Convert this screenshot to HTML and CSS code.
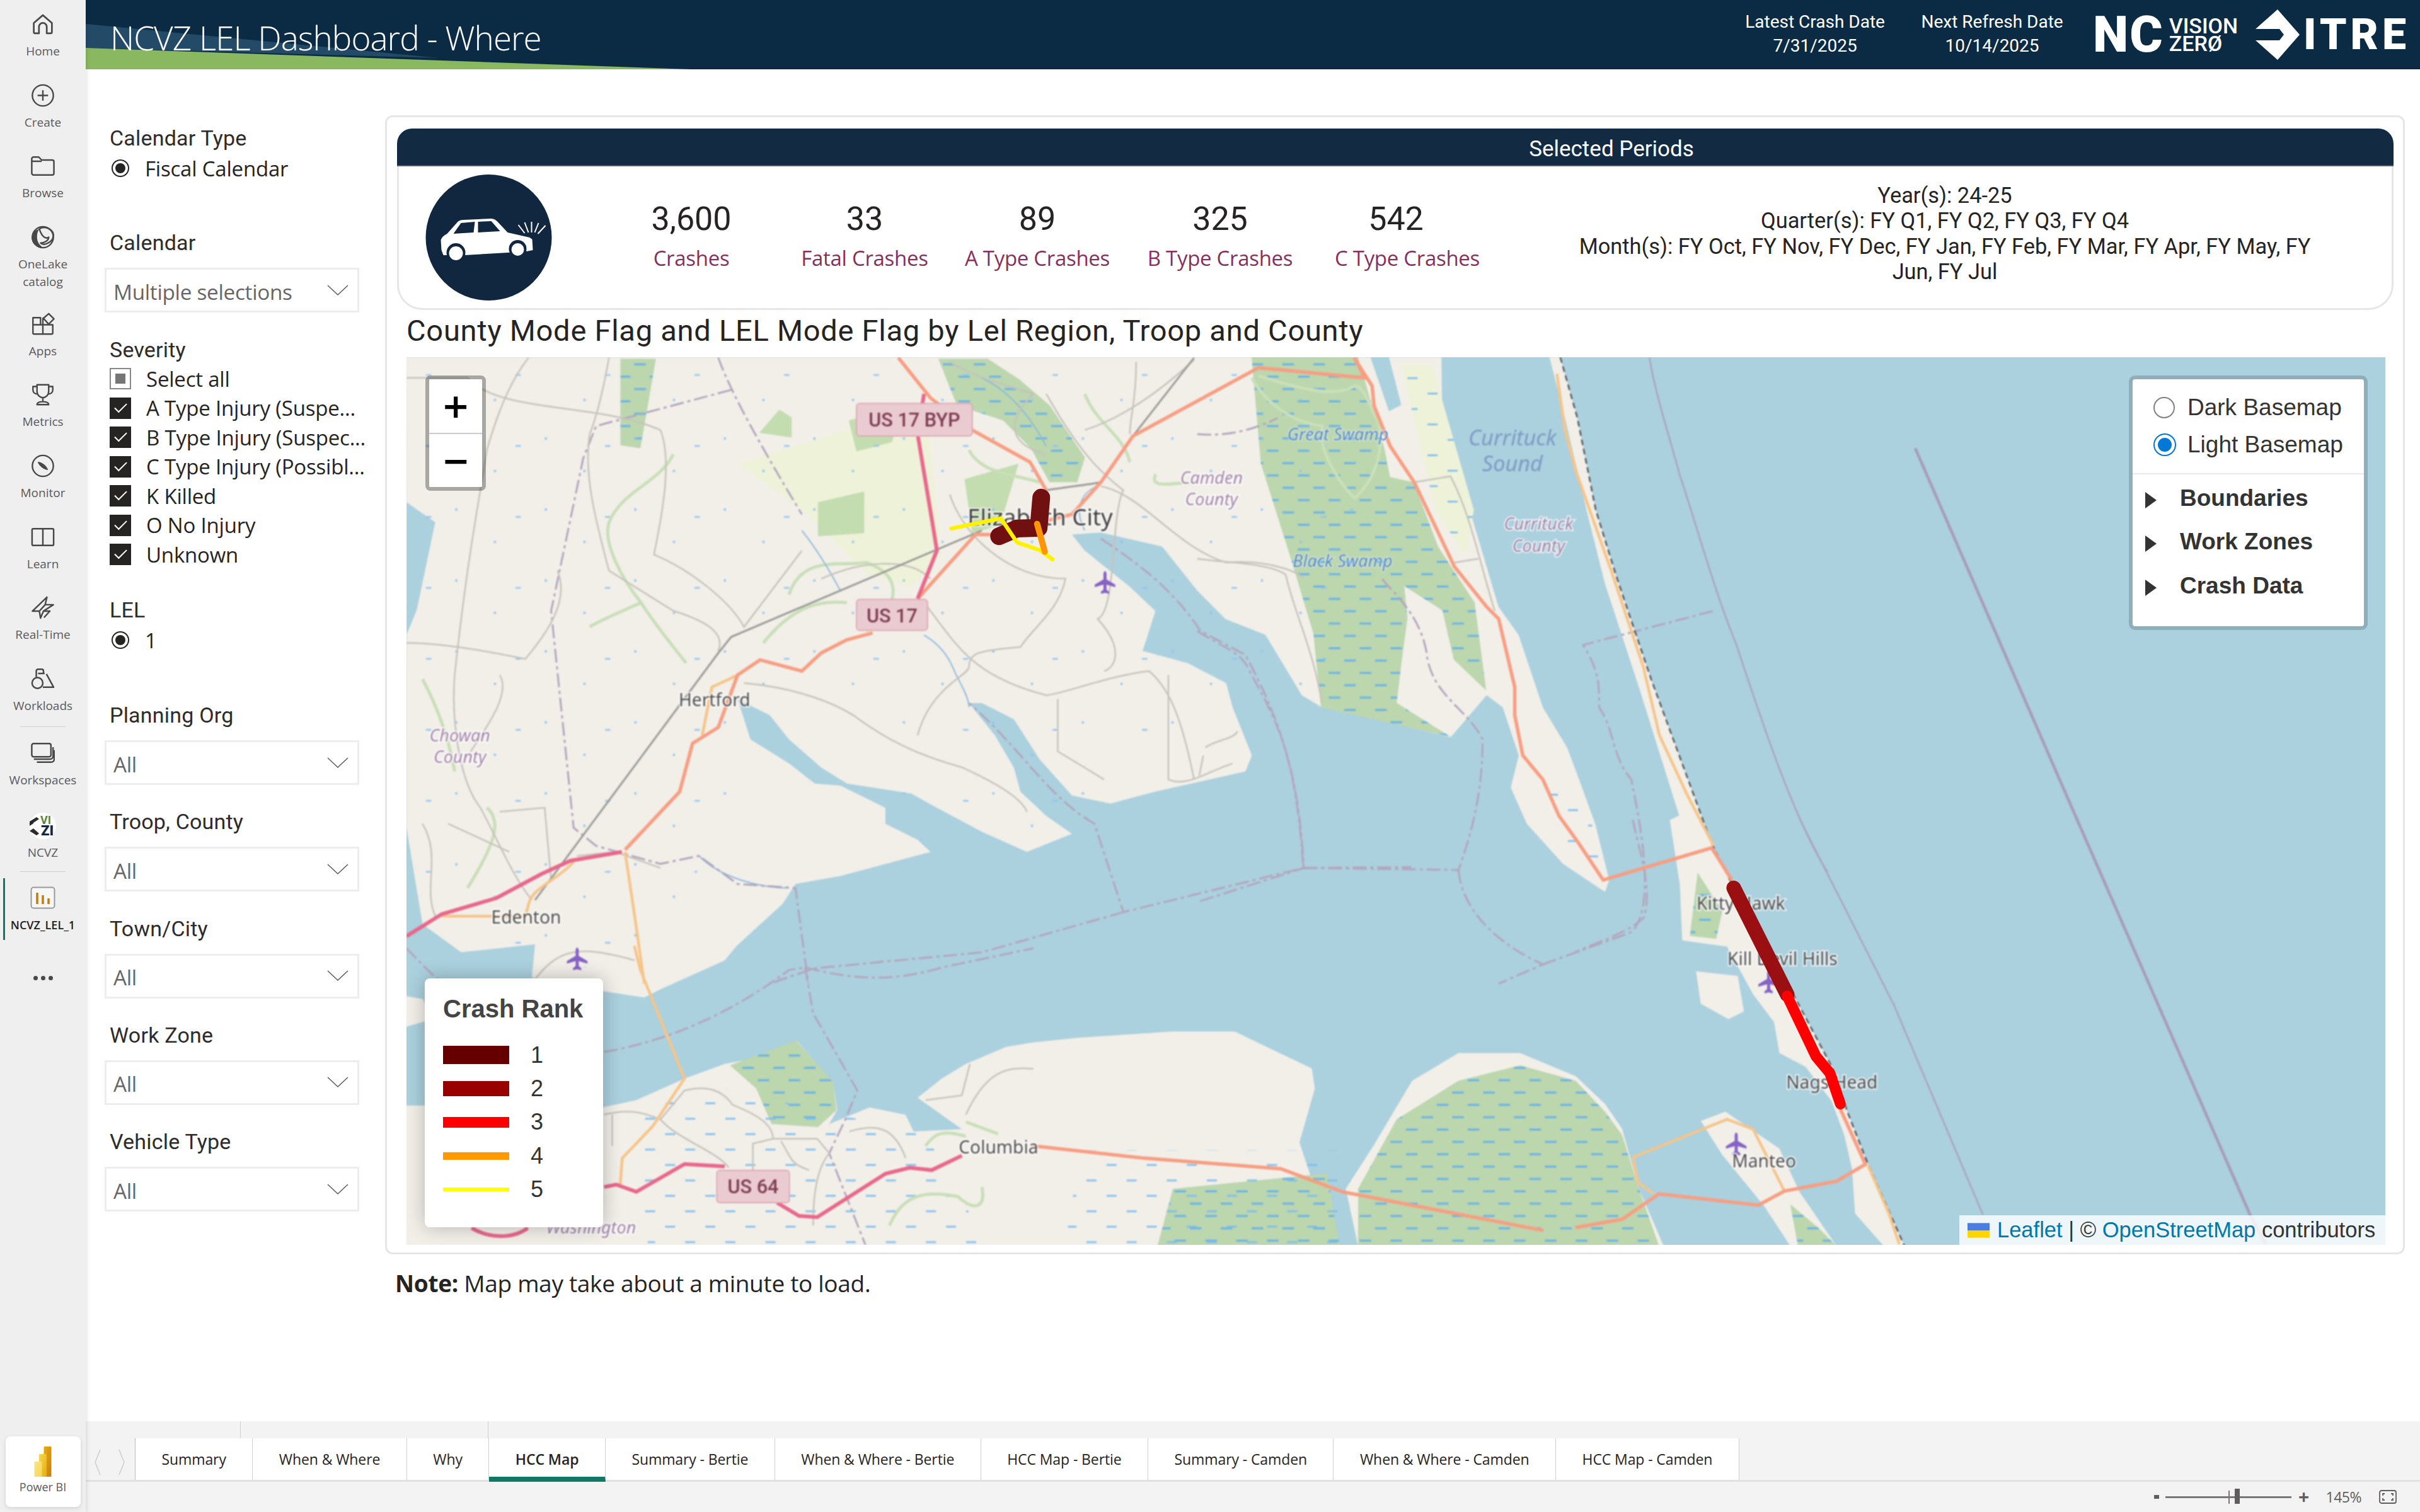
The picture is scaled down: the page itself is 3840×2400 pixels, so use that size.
FILE: index.html
```html
<!DOCTYPE html>
<html lang="en">
  <head>
    <meta charset="UTF-8" />
    <title>NCVZ LEL Dashboard - Where</title>
    <link rel="stylesheet" href="styles.css">
  </head>
  <body>
    <div class="app">
      <nav class="nav">
        <a class="nav-item">
          <svg class="nav-icon" viewBox="0 0 36 36"><path d="M4 16 L18 4 L32 16 V30 a2 2 0 0 1 -2 2 H24 V22 a6 6 0 0 0 -12 0 V32 H6 a2 2 0 0 1 -2 -2 Z"/></svg>
          <span>Home</span>
        </a>
        <a class="nav-item">
          <svg class="nav-icon" viewBox="0 0 40 40"><circle cx="20" cy="20" r="18"/><path d="M20 11 V29 M11 20 H29"/></svg>
          <span>Create</span>
        </a>
        <a class="nav-item">
          <svg class="nav-icon" viewBox="0 0 40 36"><path d="M1.5 6 a3 3 0 0 1 3 -3 H13 L18 8 H35.5 a3 3 0 0 1 3 3 V30 a3 3 0 0 1 -3 3 H4.5 a3 3 0 0 1 -3 -3 Z M1.5 10 H18"/></svg>
          <span>Browse</span>
        </a>
        <a class="nav-item nav-item-tall">
          <svg class="nav-icon" viewBox="0 0 40 40"><path class="nav-fill" d="M14 6 C5 8 0 15 1 23 C2 32 10 38 20 38 C16 34 10 30 10 20 C10 14 11 10 14 6 Z"/><path d="M14 6 C20 1 30 3 36 10 C40 16 38 24 32 28 C26 32 20 34 16 30 C22 30 30 26 30 20 C24 24 18 18 14 6 Z"/><circle cx="20" cy="20" r="18"/></svg>
          <span>OneLake<br>catalog</span>
        </a>
        <a class="nav-item">
          <svg class="nav-icon" viewBox="0 0 40 40"><path d="M3 9 H16 V21 H3 Z M3 21 H20 V37 H5 a2 2 0 0 1 -2 -2 Z M20 21 H37 V35 a2 2 0 0 1 -2 2 H20 Z M20 9 V21 M21 10 L30 2 L39 11 L30 20 Z"/></svg>
          <span>Apps</span>
        </a>
        <a class="nav-item">
          <svg class="nav-icon" viewBox="0 0 40 40"><path d="M10 3 H30 V14 C30 21 25 25 20 25 C15 25 10 21 10 14 Z M10 6 H3 V12 C3 16 6 19 11 19 M30 6 H37 V12 C37 16 34 19 29 19 M20 25 V32 M10 37 C10 33 14 32 20 32 C26 32 30 33 30 37 Z"/></svg>
          <span>Metrics</span>
        </a>
        <a class="nav-item">
          <svg class="nav-icon" viewBox="0 0 40 40"><circle cx="20" cy="20" r="18"/><path class="nav-fill" d="M11 13 C18 13 26 19 29 27 C22 27 14 21 11 13 Z"/></svg>
          <span>Monitor</span>
        </a>
        <a class="nav-item">
          <svg class="nav-icon" viewBox="0 0 40 32"><path d="M4 2 H36 a2 2 0 0 1 2 2 V28 a2 2 0 0 1 -2 2 H4 a2 2 0 0 1 -2 -2 V4 a2 2 0 0 1 2 -2 Z M20 2 V30"/></svg>
          <span>Learn</span>
        </a>
        <a class="nav-item">
          <svg class="nav-icon" viewBox="0 0 40 40"><path d="M27 2 L24 15 H38 L21 26 L16 38 L14 26 H2 Z M14 26 L24 15 M21 26 H32 L22 37"/></svg>
          <span>Real-Time</span>
        </a>
        <a class="nav-item">
          <svg class="nav-icon" viewBox="0 0 40 36"><circle cx="11" cy="25" r="9"/><path d="M9 15 V5 a3 3 0 0 1 3 -3 H18 a3 3 0 0 1 3 3 V9 H12 M26 10 L38 32 H20 M15 9 H23"/></svg>
          <span>Workloads</span>
        </a>
        <div class="nav-rule"></div>
        <a class="nav-item">
          <svg class="nav-icon" viewBox="0 0 40 36"><rect x="1.5" y="2" width="32" height="22" rx="3"/><path d="M5 28 H32 a5 5 0 0 0 5 -5 V8 M10 33 H34 a5 5 0 0 0 5 -5 V13"/></svg>
          <span>Workspaces</span>
        </a>
        <a class="nav-item">
          <span class="nav-badge">
            <svg viewBox="0 0 48 42"><circle cx="24" cy="21" r="21" class="badge-bg"/><path class="badge-dark" d="M3 14 L14 7 L18 10 L9 16 V17 L3 21 Z M3 29 L9 25 L18 33 L14 36 Z"/><text x="20" y="18" class="badge-vi">VI</text><text x="21" y="36" class="badge-z">ZI</text></svg>
          </span>
          <span>NCVZ</span>
        </a>
        <div class="nav-rule nav-rule-low"></div>
        <a class="nav-item nav-item-active">
          <svg class="nav-report" viewBox="0 0 40 36"><rect x="1.5" y="1.5" width="37" height="33" rx="4"/><path d="M11 10 V28 M20 14 V28 M29 19 V28"/></svg>
          <span>NCVZ_LEL_1</span>
        </a>
        <div class="nav-more"><i></i><i></i><i></i></div>
        <a class="nav-app">
          <svg viewBox="0 0 36 64" class="nav-pbi">
            <defs>
              <linearGradient id="pb1" x1="0" x2="1" y1="0" y2="1"><stop offset="0" stop-color="#e6ad10"/><stop offset="1" stop-color="#c87d0e"/></linearGradient>
              <linearGradient id="pb2" x1="0" x2="1" y1="0" y2="1"><stop offset="0" stop-color="#f6d751"/><stop offset="1" stop-color="#e6ad10"/></linearGradient>
              <linearGradient id="pb3" x1="0" x2="1" y1="0" y2="1"><stop offset="0" stop-color="#f9e589"/><stop offset="1" stop-color="#f6d751"/></linearGradient>
            </defs>
            <rect x="20" y="0" width="16" height="64" rx="1.5" fill="url(#pb1)"/>
            <rect x="10" y="16" width="16" height="48" rx="1.5" fill="url(#pb2)"/>
            <rect x="0" y="32" width="16" height="32" rx="1.5" fill="url(#pb3)"/>
          </svg>
          <span>Power BI</span>
        </a>
      </nav>

      <div class="main">
        <header class="top-bar">
          <svg class="top-wedge" viewBox="0 0 1200 110" preserveAspectRatio="none">
            <polygon points="0,38 560,92 0,76" fill="#234a67"/>
            <polygon points="0,76 960,110 0,110" fill="#8ab860"/>
          </svg>
          <h1 class="top-title">NCVZ LEL Dashboard - Where</h1>
          <div class="top-date top-date-first">Latest Crash Date<br>7/31/2025</div>
          <div class="top-date top-date-next">Next Refresh Date<br>10/14/2025</div>
          <div class="logo-nc">
            <span class="logo-nc-big">NC</span>
            <span class="logo-nc-small">VISION<br>ZERØ</span>
          </div>
          <svg class="logo-arrow" viewBox="0 0 70 80"><path d="M35 0 L70 40 L35 80 L0 49 H38 L45 40 L38 31 H0 Z"/></svg>
          <span class="logo-itre">ITRE</span>
        </header>

        <div class="page">
          <aside class="filters">
            <div class="slicer slicer-type">
              <div class="slicer-label">Calendar Type</div>
              <div class="option"><span class="radio"></span>Fiscal Calendar</div>
            </div>
            <div class="slicer slicer-calendar">
              <div class="slicer-label">Calendar</div>
              <div class="dropdown"><span>Multiple selections</span><svg viewBox="0 0 34 18"><path d="M1 1 L17 16 L33 1"/></svg></div>
            </div>
            <div class="slicer slicer-severity">
              <div class="slicer-label">Severity</div>
              <div class="option"><span class="check check-part"></span>Select all</div>
              <div class="option"><span class="check"></span>A Type Injury (Suspe...</div>
              <div class="option"><span class="check"></span>B Type Injury (Suspec...</div>
              <div class="option"><span class="check"></span>C Type Injury (Possibl...</div>
              <div class="option"><span class="check"></span>K Killed</div>
              <div class="option"><span class="check"></span>O No Injury</div>
              <div class="option"><span class="check"></span>Unknown</div>
            </div>
            <div class="slicer slicer-lel">
              <div class="slicer-label">LEL</div>
              <div class="option"><span class="radio"></span>1</div>
            </div>
            <div class="slicer">
              <div class="slicer-label">Planning Org</div>
              <div class="dropdown"><span>All</span><svg viewBox="0 0 34 18"><path d="M1 1 L17 16 L33 1"/></svg></div>
            </div>
            <div class="slicer">
              <div class="slicer-label">Troop, County</div>
              <div class="dropdown"><span>All</span><svg viewBox="0 0 34 18"><path d="M1 1 L17 16 L33 1"/></svg></div>
            </div>
            <div class="slicer">
              <div class="slicer-label">Town/City</div>
              <div class="dropdown"><span>All</span><svg viewBox="0 0 34 18"><path d="M1 1 L17 16 L33 1"/></svg></div>
            </div>
            <div class="slicer">
              <div class="slicer-label">Work Zone</div>
              <div class="dropdown"><span>All</span><svg viewBox="0 0 34 18"><path d="M1 1 L17 16 L33 1"/></svg></div>
            </div>
            <div class="slicer">
              <div class="slicer-label">Vehicle Type</div>
              <div class="dropdown"><span>All</span><svg viewBox="0 0 34 18"><path d="M1 1 L17 16 L33 1"/></svg></div>
            </div>
          </aside>

          <section class="report">
            <div class="card">
              <div class="panel-head">Selected Periods</div>
              <div class="panel-body">
                <svg class="crash-icon" viewBox="0 0 200 200">
                  <circle cx="100" cy="100" r="100" fill="#11263f"/>
                  <path fill="#fff" d="M25 120 L24 104 Q26 98 34 94 L50 76 Q53 72 60 72 L104 70 Q110 70 115 76 L130 92 L165 100 L169 103 L170 120 L160 122 L130 124 L62 128 L28 128 Z"/>
                  <path fill="#11263f" d="M44 94 L56 77 L78 75 L76 92 Z M83 75 L104 74 L118 90 L83 92 Z"/>
                  <circle cx="48" cy="124" r="15" fill="#11263f"/>
                  <circle cx="48" cy="125" r="11" fill="#fff"/>
                  <circle cx="146" cy="118" r="14" fill="#11263f"/>
                  <circle cx="146" cy="119" r="10" fill="#fff"/>
                  <path stroke="#fff" stroke-width="2" d="M147 80 L157 93 M157 76 L163 92 M168 75 L168 92 M179 77 L173 92 M190 81 L178 94"/>
                </svg>
                <div class="kpis">
                  <div class="kpi"><div class="kpi-value">3,600</div><div class="kpi-label">Crashes</div></div>
                  <div class="kpi"><div class="kpi-value">33</div><div class="kpi-label">Fatal Crashes</div></div>
                  <div class="kpi"><div class="kpi-value">89</div><div class="kpi-label">A Type Crashes</div></div>
                  <div class="kpi"><div class="kpi-value">325</div><div class="kpi-label">B Type Crashes</div></div>
                  <div class="kpi"><div class="kpi-value">542</div><div class="kpi-label">C Type Crashes</div></div>
                </div>
                <div class="periods">
                  Year(s): 24-25<br>
                  Quarter(s): FY Q1, FY Q2, FY Q3, FY Q4<br>
                  Month(s): FY Oct, FY Nov, FY Dec, FY Jan, FY Feb, FY Mar, FY Apr, FY May, FY<br>
                  Jun, FY Jul
                </div>
              </div>
              <h2 class="map-title">County Mode Flag and LEL Mode Flag by Lel Region, Troop and County</h2>
              <div class="map">
                <svg class="map-canvas" viewBox="263.4 231 1282.2 575.3">
                  <defs>
                    <pattern id="wet" width="20" height="16" patternUnits="userSpaceOnUse">
                      <rect width="20" height="16" fill="#bcd6ae"/>
                      <rect x="1" y="3" width="7.5" height="1.2" fill="#62b1ec"/>
                      <rect x="11" y="11" width="7.5" height="1.2" fill="#62b1ec"/>
                    </pattern>
                    <pattern id="marsh" width="26" height="20" patternUnits="userSpaceOnUse">
                      <rect x="2" y="4" width="6.5" height="1.1" fill="#7abcef"/>
                      <rect x="15" y="14" width="6.5" height="1.1" fill="#7abcef"/>
                    </pattern>
                    <pattern id="sparse" width="58" height="46" patternUnits="userSpaceOnUse">
                      <rect x="5" y="7" width="1.4" height="1.4" fill="#8cc4ef"/>
                      <rect x="30" y="28" width="1.4" height="1.4" fill="#8cc4ef"/>
                      <rect x="44" y="12" width="3.5" height="1" fill="#8cc4ef"/>
                    </pattern>
                    <symbol id="plane" viewBox="0 0 24 24"><path d="M12 1 C11 1 10.5 2 10.5 4 V9 L2 14 V16.5 L10.5 14 V19 L8 21 V23 L12 22 L16 23 V21 L13.5 19 V14 L22 16.5 V14 L13.5 9 V4 C13.5 2 13 1 12 1Z" fill="#8562c4"/></symbol>
                  </defs>
                  <g class="map-base">
                    <rect x="263" y="231" width="1283" height="576" fill="#abd0de"/>
                    <!-- land -->
                    <g fill="#f2efe9">
                      <polygon points="263,231 934,231 934.6,275.6 942.5,293.8 955.5,340.7 971,392.8 984,411 999.7,457.9 1015.4,483.9 1023.2,504.7 1033.6,533.4 1042.7,569.8 1040,577.6 1012.8,559.4 989.3,533.4 978.9,510 984.1,489 973.7,457.9 963.3,450 939.9,477.4 908.6,469.6 856.5,457.9 843.5,450 820,411 794,400.6 775.8,382.3 753,353.7 713.3,344.6 694.6,345.9 702.9,356.3 732,379.7 748.7,395.4 740.4,421.4 769.5,429.2 794.5,442.2 798.7,457.9 811.2,489.1 807,499.5 748.7,512.5 719.6,520.3 694.6,515.1 673.7,491.7 657,465.7 636.2,455.2 627.9,455.2 644.6,476 657,497 661.2,512.5 677.9,528.2 694.6,539.9 665.4,551.6 636.2,538.6 607.1,523 590.4,513.8 548.8,507.3 532.1,496.9 511.3,478.7 498.8,463 478,452.6 486.3,478.7 511.3,494.3 528,507.3 544.6,508.6 573.7,523 573.7,533.4 594.6,543.8 603,551.6 544.6,567.2 515.4,572.4 507,585.4 477.4,612.5 469.6,622 428,640.6 417.5,646 391.5,642 353,637 344.6,632.8 346.7,611.5 323.8,614 298.8,616.7 273.8,598.5 263.4,536"/>
                      <polygon points="263,716 391.5,717 412.3,712.5 443.6,698.5 469.6,689 490.5,685 516.5,674.2 540,701.6 542.5,718.8 537.3,728 563.4,717.2 586.8,722 592,732.8 623.2,731.3 594.6,711 610.2,698.5 625.9,689 651.9,678 669.6,675 700,672 760,668 800,668 850,692 852,705 842,740 852,770 868,807 263,807"/>
                      <polygon points="880,807 872,770 890,742 915,700 945,682 985,682 1021,697 1040,715 1051,731 1062,770 1078,807"/>
                      <!-- outer banks -->
                      <polygon points="1011,231 1022,270 1034,330 1047,372 1070,440 1109,546 1122,572 1163,646 1187,691 1197,720 1210,753 1234,807 1220.6,807 1202,786 1200,757 1195,735 1186.7,713 1170,691 1153,682 1149.5,662 1136,644 1119,613 1090,609 1088.5,573 1082,531 1088,528 1062,445 1040,378 1028,330 1014,270 1004,231"/>
                      <polygon points="1099,629 1126,632 1130,655 1120,660 1102,650"/>
                      <polygon points="1102,726 1118,720 1153,744 1166,772 1190,807 1160,807 1143,781 1116,748"/>
                      <polygon points="263,645 274,647 280,660 263,665"/>
                    </g>
                    <!-- small rivers cut into the land -->
                    <g fill="#abd0de">
                      <polygon points="263.4,325 282,338 270,395 263.4,411"/>
                      <polygon points="888,231 900,231 908,262 900,266"/>
                    </g>
                    <!-- farm and wood -->
                    <g fill="#eef2d8">
                      <polygon points="478,300 600,262 610,360 590,380 560,370 520,330"/>
                      <polygon points="908,236 928,236 955,330 950,360 930,330"/>
                    </g>
                    <g fill="#c3dcb0">
                      <polygon points="492,280 505,265 513,270 513,283"/>
                      <polygon points="530,325 560,318 560,345 530,347"/>
                      <polygon points="550,272 585,262 578,286 555,292"/>
                      <polygon points="625,310 660,300 648,340 630,345"/>
                    </g>
                    <!-- wetlands -->
                    <g>
                      <polygon fill="url(#wet)" points="608,232 640,232 660,245 680,262 703,296 698,312 680,312 668,290 650,272 620,262"/>
                      <polygon fill="url(#wet)" points="402,232 425,232 415,290 402,288"/>
                      <polygon fill="url(#wet)" points="811,231 880,231 897,290 905,330 912,400 908,430 905,455 940,477 856,458 851,410 836,360 817,300"/>
                      <polygon fill="url(#wet)" points="893,307 916,312 932,354 955.5,390 963,447 942,427 934.6,395 914,382 898,372"/>
                      <polygon fill="url(#wet)" points="473,690 516,674 540,701 542,719 530,730 500,728 490,705"/>
                      <polygon fill="url(#wet)" points="905,725 945,700 985,690 1021,700 1040,720 1051,735 1062,770 1075,807 880,807 880,770"/>
                      <polygon fill="url(#wet)" points="760,770 860,760 868,807 750,807"/>
                      <polygon fill="url(#wet)" points="1160,780 1178,795 1190,807 1165,807"/>
                      <polygon fill="url(#wet)" points="1100,565 1116,590 1112,608 1095,606"/>
                      <polygon fill="url(#marsh)" points="700,745 870,745 868,807 690,807"/>
                      <polygon fill="url(#marsh)" points="410,720 470,705 600,735 640,807 420,807"/>
                      <polygon fill="url(#marsh)" points="1000,500 1025,510 1040,565 1015,555"/>
                      <polygon fill="url(#marsh)" points="908,236 928,236 955,330 950,360 930,330"/>
                      <polygon fill="url(#sparse)" points="265,240 900,240 860,440 660,500 500,450 420,640 270,590"/>
                      <polygon fill="url(#sparse)" points="530,500 740,510 660,548 600,520"/>
                    </g>
                    <!-- light green streams and forest ribbons -->
                    <g class="ln-wood" transform="translate(261.3 228.7) scale(.4166 .2604)">
                      <path d="M420 250 C400 320 340 340 320 420 C310 470 340 560 370 620 C340 640 300 670 290 680 M370 620 C390 670 420 730 440 770"/>
                      <path d="M600 600 C620 500 680 530 720 520 C760 540 790 600 720 690 M560 720 C600 640 640 610 690 620"/>
                      <path d="M880 240 C900 300 950 300 990 320 M1060 100 C1080 180 1120 200 1130 270 M1170 300 C1160 340 1200 320 1230 320"/>
                      <path d="M1320 60 C1340 120 1380 170 1430 180 C1420 240 1460 330 1480 360 C1520 300 1530 200 1510 150 C1500 110 1490 80 1480 80 C1450 110 1400 90 1330 55"/>
                      <path d="M100 1330 C130 1250 160 1170 130 1130 M30 810 C50 870 70 950 80 1040"/>
                    </g>
                    <g class="ln-wood" transform="translate(261.3 612.5) scale(.2604 .1563)">
                      <path d="M1210 1160 C1240 1040 1290 1010 1380 1040 C1420 1100 1450 1090 1440 1000 M1300 830 C1320 780 1340 760 1400 790 M1400 730 L1480 780"/>
                    </g>
                    <g class="ln-creek" transform="translate(261.3 228.7) scale(.4166 .2604)">
                      <path d="M810 700 C840 730 850 760 860 800 C870 830 880 860 880 880 M620 440 C650 500 670 560 680 590"/>
                      <path d="M460 1250 C490 1300 550 1330 600 1330 M900 60 C950 100 980 170 1000 230 M1060 440 C1040 380 1060 340 1080 330"/>
                    </g>
                    <!-- boundaries -->
                    <g class="ln-bound">
                      <g transform="translate(261.3 228.7) scale(.4166 .2604)">
                        <path d="M490 10 C510 100 560 240 620 400 M510 90 L300 180 L280 260 L230 640 L265 1180 L300 1225 L400 1270 L460 1250 L520 1320 L610 1330 L630 1568"/>
                        <path d="M1085 460 C1130 510 1190 570 1240 690 L1310 750 C1370 930 1390 1050 1400 1280 L1120 1390 L1075 1170 C1000 1100 960 980 880 870"/>
                        <path d="M1400 1280 L1568 1278 M1120 1390 L900 1490 L640 1530 L570 1568 M5 1480 C30 1520 50 1560 70 1568"/>
                      </g>
                      <g transform="translate(775.8 228.7) scale(.2604)">
                        <path d="M0 690 C60 730 110 740 130 790 C190 900 250 1000 265 1280 L0 1365 M265 1280 L650 1285 C680 1200 710 1100 710 960 C670 880 580 850 570 740 C550 640 480 590 460 560"/>
                        <path d="M650 1285 C660 1400 770 1480 860 1520 L750 1568 M860 1520 L1080 1440 C1130 1390 1120 1250 1080 1060 C1030 1000 1040 940 1000 880 C1000 820 1000 790 960 725 L1285 640"/>
                        <path d="M0 200 C100 210 180 170 200 160"/>
                      </g>
                      <g transform="translate(1020.8 530.8) scale(.3386 .1823)">
                        <path d="M110 0 C120 100 150 250 130 350 C100 400 50 430 0 470"/>
                      </g>
                      <g transform="translate(261.3 612.5) scale(.2604 .1563)">
                        <path d="M500 440 C640 400 800 300 960 100 L1000 90 C1100 130 1200 160 1340 90 L1568 10 M1000 90 L1020 280 L1130 600 L1100 720 L1060 860 L1150 1240"/>
                      </g>
                    </g>
                    <!-- offshore limits -->
                    <g class="ln-sea">
                      <path transform="translate(775.8 228.7) scale(.2604)" d="M1125 10 C1140 100 1170 190 1200 300 C1240 420 1290 600 1340 720 C1400 900 1480 1150 1568 1290"/>
                      <path transform="translate(1020.8 530.8) scale(.3386 .1823)" d="M430 0 L610 660 L780 1405"/>
                      <path class="ln-sea-wide" d="M1241 290 L1346 531 L1457.6 786 L1468 806"/>
                    </g>
                    <!-- minor roads -->
                    <g class="ln-minor" transform="translate(261.3 228.7) scale(.4166 .2604)">
                      <path d="M195 10 C170 60 150 130 130 240 C120 350 100 500 80 800 C75 900 85 1060 120 1130 C150 1220 170 1300 200 1360"/>
                      <path d="M320 10 C310 100 300 160 290 200 C280 300 300 420 320 540 C350 570 400 620 420 640 C480 670 500 700 490 740"/>
                      <path d="M5 60 H100 C150 150 300 120 400 190 C420 270 400 420 390 500 C450 540 510 620 530 680 L620 490"/>
                      <path d="M5 720 C60 720 130 740 190 760 C220 700 260 620 240 540 M150 800 C170 850 120 950 105 990"/>
                      <path d="M530 820 C600 830 660 860 700 900 C750 960 800 1000 870 1030 C910 1060 960 1100 970 1140"/>
                      <path d="M650 560 C720 510 790 510 820 560 M810 620 C860 720 880 800 1000 850 C1020 850 1100 800 1160 790 C1190 830 1210 900 1230 1060"/>
                      <path d="M1085 330 C1150 350 1200 480 1280 520 C1350 510 1400 550 1400 560"/>
                      <path d="M850 350 C870 450 940 560 1030 560 C1020 640 980 680 960 730 C900 740 880 740 880 780 C880 800 820 830 800 950"/>
                      <path d="M1000 100 C1050 240 1080 290 1120 340 C1100 400 1110 640 1080 660 C1120 730 1110 780 1090 790"/>
                      <path d="M1140 20 C1140 120 1130 160 1130 200 M1060 190 C1100 170 1160 120 1230 15 M1000 250 C950 230 930 180 980 100 C900 60 880 50 850 20"/>
                      <path d="M1018 860 V990 C1060 1030 1080 1050 1090 1060 M1190 800 V1060 C1220 1080 1250 1040 1290 1020"/>
                      <path d="M165 1240 L70 1170 M150 1140 L220 1130 L230 1310 M30 1170 C60 1250 30 1330 50 1400"/>
                      <path d="M200 1568 C240 1480 270 1470 360 1510 M270 1250 L330 1240 L400 1280"/>
                    </g>
                    <g class="ln-minor" transform="translate(775.8 228.7) scale(.2604)">
                      <path d="M0 510 C60 520 180 520 220 550 C240 640 290 740 310 870"/>
                      <path d="M540 320 L630 305 C680 400 700 510 740 640 M640 520 L700 510"/>
                      <path d="M20 980 C50 960 90 960 100 940 M15 1000 L5 1050"/>
                    </g>
                    <g class="ln-minor" transform="translate(261.3 612.5) scale(.2604 .1563)">
                      <path d="M500 700 C570 670 610 700 640 720 C680 800 780 850 810 920 M640 720 L700 600 C750 580 790 590 820 660 C880 700 920 740 920 800 L870 820 V930 M920 800 H1030 L1060 860 C1020 940 1020 1100 1020 1160"/>
                      <path d="M1110 770 C1170 740 1220 740 1250 880 M1400 700 C1450 520 1500 500 1568 510 M1300 640 L1390 620 L1410 490"/>
                      <path d="M940 810 C970 890 960 900 1010 930 M520 700 V830"/>
                    </g>
                    <!-- railway -->
                    <path class="ln-rail" transform="translate(261.3 228.7) scale(.4166 .2604)" d="M205 1360 L490 745 L510 705 L900 440 M1000 340 C1040 330 1070 325 1085 320 L1135 205 L1230 10"/>
                    <!-- state edge along the banks -->
                    <path class="ln-edge" d="M1011 231 L1022 270 L1034 330 L1047 372 L1070 440 L1109 546 L1122 572 L1163 646 L1187 691 L1197 720 L1210 753 L1234 807"/>
                    <!-- secondary roads -->
                    <g class="ln-second">
                      <path transform="translate(775.8 228.7) scale(.2604)" d="M895 50 L915 190 L945 300 L1030 540 L1110 780 L1150 950 L1220 1100 L1285 1225"/>
                      <path transform="translate(261.3 228.7) scale(.4166 .2604)" d="M345 1240 L360 1400 L375 1568 M265 1265 C240 1310 200 1330 195 1370 L190 1400 L60 1400 M520 800 L480 830 L465 950"/>
                      <path transform="translate(261.3 612.5) scale(.2604 .1563)" d="M575 0 L590 100 L700 550 L620 750 L545 880 L540 990"/>
                      <path transform="translate(1020.8 530.8) scale(.3386 .1823)" d="M110 1200 L290 1065 L340 1100 L400 1320 M110 1200 L120 1290 L150 1330 M560 1230 L600 1400 L620 1510"/>
                    </g>
                    <!-- primary roads -->
                    <g class="ln-primary">
                      <path transform="translate(261.3 228.7) scale(.4166 .2604)" d="M345 1235 L430 1090 L450 970 L490 930 L520 800 L555 762 L620 790 L650 745 L690 712 L730 695 M800 610 L890 450 L915 450 L1040 400 L1085 320 L1135 205 L1330 35 L1495 60 L1480 10 M770 10 L820 110 L885 190 L975 270 L1000 340"/>
                      <path transform="translate(775.8 228.7) scale(.2604)" d="M390 10 L435 80 L440 130 L480 230 L540 320 L640 530 L720 630 L750 660 L790 830 L790 900 L810 1000 L860 1060 L900 1150 L950 1220 L1010 1310 L1280 1230 L1330 1310"/>
                      <path transform="translate(1020.8 530.8) scale(.3386 .1823)" d="M0 1450 L90 1420 L160 1330 L350 1370 L400 1320 L500 1285 L555 1225 L505 1020"/>
                    </g>
                    <!-- trunk roads -->
                    <g class="ln-trunk">
                      <path transform="translate(261.3 228.7) scale(.4166 .2604)" d="M5 1450 L60 1395 L145 1355 L215 1295 L260 1262 L340 1240 M810 100 L800 200 L825 440 L830 490 L800 610"/>
                      <path transform="translate(261.3 612.5) scale(.2604 .1563)" d="M170 1170 C210 1210 270 1220 310 1170 M500 1000 L530 990 L580 1020 L700 905 L800 915 M930 1065 L985 1120 L1030 1125 L1200 945 L1260 920 L1315 930 L1390 870"/>
                    </g>
                    <path class="ln-primary" d="M668 742 L740 750 L830 757 L870 772 L1000 797"/>

                    <!-- shields -->
                    <g class="shield"><rect x="555" y="261" width="75" height="21" rx="2"/><text x="592.5" y="276">US 17 BYP</text></g>
                    <g class="shield"><rect x="555" y="388" width="46" height="20" rx="2"/><text x="578" y="403">US 17</text></g>
                    <g class="shield"><rect x="464.5" y="758" width="47" height="21" rx="2"/><text x="488" y="773">US 64</text></g>

                    <!-- airports -->
                    <use href="#plane" x="708" y="369" width="16" height="16"/>
                    <use href="#plane" x="366" y="613" width="16" height="16"/>
                    <use href="#plane" x="1117" y="733" width="16" height="16"/>
                    <use href="#plane" x="1138" y="628" width="16" height="16"/>

                    <!-- place names -->
                    <g class="place">
                      <text x="674" y="340" class="place-big">Elizabeth City</text>
                      <text x="463" y="457">Hertford</text>
                      <text x="341" y="598">Edenton</text>
                      <text x="647" y="747">Columbia</text>
                      <text x="1143" y="756">Manteo</text>
                      <text x="1128" y="589">Kitty Hawk</text>
                      <text x="1155" y="625">Kill Devil Hills</text>
                      <text x="1187" y="705">Nags Head</text>
                    </g>
                    <g class="county">
                      <text x="785" y="313">Camden</text>
                      <text x="785" y="327">County</text>
                      <text x="298" y="480">Chowan</text>
                      <text x="298" y="494">County</text>
                      <text x="997" y="343">Currituck</text>
                      <text x="997" y="357">County</text>
                      <text x="383" y="799">Washington</text>
                    </g>
                    <g class="water-name">
                      <text x="980" y="288" class="sound">Currituck</text>
                      <text x="980" y="305" class="sound">Sound</text>
                      <text x="867" y="285">Great Swamp</text>
                      <text x="870" y="367">Black Swamp</text>
                    </g>
                  </g>
                  <!-- crash segments -->
                  <g class="crash-lines">
                    <path class="rank-1" d="M674.7 322 L673 341.6 L659 342 L647.4 347"/>
                    <path class="rank-5" d="M616.4 342 L648.6 335.5 L659 351 L673.8 356 L682 362"/>
                    <path class="rank-4" d="M672 339 L677 357"/>
                    <path class="rank-2" d="M1123.4 575 L1158 644"/>
                    <path class="rank-3" d="M1158 645 L1176.6 684 L1185.7 695 L1192.5 715"/>
                  </g>
                </svg>

                <div class="zoom-ctl">
                  <div class="zoom-btn">+</div>
                  <div class="zoom-btn">&minus;</div>
                </div>

                <div class="layers">
                  <div class="layer-radios">
                    <div class="layer-radio"><span class="dot"></span>Dark Basemap</div>
                    <div class="layer-radio"><span class="dot dot-on"></span>Light Basemap</div>
                  </div>
                  <div class="layer-group"><span class="tri"></span>Boundaries</div>
                  <div class="layer-group"><span class="tri"></span>Work Zones</div>
                  <div class="layer-group"><span class="tri"></span>Crash Data</div>
                </div>

                <div class="legend">
                  <div class="legend-title">Crash Rank</div>
                  <div class="legend-row"><span class="swatch sw-1"></span>1</div>
                  <div class="legend-row"><span class="swatch sw-2"></span>2</div>
                  <div class="legend-row"><span class="swatch sw-3"></span>3</div>
                  <div class="legend-row"><span class="swatch sw-4"></span>4</div>
                  <div class="legend-row"><span class="swatch sw-5"></span>5</div>
                </div>

                <div class="attribution">
                  <svg viewBox="0 0 12 8"><rect width="12" height="4" fill="#4c7be1"/><rect y="4" width="12" height="4" fill="#ffd500"/></svg>
                  <a>Leaflet</a>&nbsp;|&nbsp;©&nbsp;<a>OpenStreetMap</a>&nbsp;contributors
                </div>
              </div>
            </div>
            <p class="note"><b>Note:</b> Map may take about a minute to load.</p>
          </section>
        </div>

        <div class="tabs-bar">
          <div class="tabs-marks"><i></i><i></i></div>
          <div class="tabs-row">
            <div class="tab-arrows">
              <svg viewBox="0 0 12 44"><path d="M10 2 L2 22 L10 42"/></svg>
              <svg viewBox="0 0 12 44"><path d="M2 2 L10 22 L2 42"/></svg>
            </div>
            <div class="tab">Summary</div>
            <div class="tab">When &amp; Where</div>
            <div class="tab">Why</div>
            <div class="tab tab-active">HCC Map</div>
            <div class="tab">Summary - Bertie</div>
            <div class="tab">When &amp; Where - Bertie</div>
            <div class="tab">HCC Map - Bertie</div>
            <div class="tab">Summary - Camden</div>
            <div class="tab">When &amp; Where - Camden</div>
            <div class="tab">HCC Map - Camden</div>
          </div>
          <div class="status">
            <span class="zoom-minus"></span>
            <span class="zoom-track"><i class="zoom-tick"></i><i class="zoom-thumb"></i></span>
            <span class="zoom-plus">+</span>
            <span class="zoom-pct">145%</span>
            <svg class="zoom-fit" viewBox="0 0 28 22"><rect x="1" y="1" width="26" height="20" rx="3"/><path d="M9 6 H6 V9 M19 6 H22 V9 M9 16 H6 V13 M19 16 H22 V13"/></svg>
          </div>
        </div>
      </div>
    </div>
  </body>
</html>
```

FILE: styles.css
```css
* {
  box-sizing: border-box;
}
body {
  margin: 0;
  background: #fff;
  font-family: "Open Sans", sans-serif;
  color: #252423;
  overflow: hidden;
}
.app {
  display: flex;
  width: 3840px;
  height: 2400px;
}

/* left rail */
.nav {
  width: 136px;
  flex: none;
  background: #efefef;
  box-shadow: 2px 0 6px rgba(0,0,0,0.1);
  display: flex;
  flex-direction: column;
  align-items: center;
  padding-top: 20px;
  position: relative;
  z-index: 2;
}
.nav-item {
  display: flex;
  flex-direction: column;
  align-items: center;
  height: 112.6px;
  flex: none;
  font-size: 19px;
  line-height: 28px;
  color: #5a5a5a;
  text-align: center;
}
.nav-item-tall {
  height: 138px;
}
.nav-icon {
  width: 38px;
  height: 37px;
  margin-bottom: 10px;
  fill: none;
  stroke: #484848;
  stroke-width: 2.6;
  stroke-linejoin: round;
  flex: none;
}
.nav-fill {
  fill: #484848;
  stroke: none;
}
.nav-rule {
  width: 72px;
  height: 1px;
  background: #cfcfcf;
  margin: -18px 0 23px;
  flex: none;
}
.nav-rule-low {
  margin: -20px 0 10px;
}
.nav-badge {
  width: 48px;
  height: 42px;
  margin-bottom: 7px;
}
.nav-badge svg {
  display: block;
}
.badge-bg {
  fill: #fff;
}
.badge-dark {
  fill: #2b2b2b;
}
.badge-vi {
  font: 700 18px "Roboto", sans-serif;
  fill: #55883a;
}
.badge-z {
  font: 900 22px "Roboto", sans-serif;
  fill: #102a43;
}
.nav-item-active {
  color: #201f1e;
  font-weight: 600;
  font-size: 18px;
  width: 100%;
  border-left: 3px solid #117865;
  margin-left: 9px;
  height: 98px;
}
.nav-report {
  width: 40px;
  height: 36px;
  margin-bottom: 11px;
  margin-top: 13px;
  margin-right: 12px;
  fill: #f7f7f7;
  stroke: #9a9a9a;
  stroke-width: 2;
  flex: none;
}
.nav-report path {
  stroke: #c27c0e;
  stroke-width: 3.5;
  fill: none;
}
.nav-item-active span {
  margin-right: 12px;
}
.nav-more {
  display: flex;
  gap: 5px;
  margin-top: 57px;
}
.nav-more i {
  width: 7px;
  height: 7px;
  border-radius: 50%;
  background: #484848;
}
.nav-app {
  margin-top: auto;
  margin-bottom: 8px;
  width: 119px;
  height: 112px;
  background: #fff;
  border-radius: 8px;
  box-shadow: 0 2px 6px rgba(0,0,0,0.12);
  display: flex;
  flex-direction: column;
  align-items: center;
  padding-top: 16px;
  font-size: 18px;
  color: #5a5a5a;
}
.nav-pbi {
  width: 36px;
  height: 48px;
  margin-bottom: 4px;
}

.main {
  flex: 1;
  display: flex;
  flex-direction: column;
  min-width: 0;
}

/* banner */
.top-bar {
  height: 110px;
  flex: none;
  background: #0b2b44;
  display: flex;
  align-items: center;
  color: #fff;
  position: relative;
  padding: 0 16px 0 39px;
}
.top-wedge {
  position: absolute;
  left: 0;
  top: 0;
  width: 1200px;
  height: 110px;
}
.top-title {
  position: relative;
  margin: 8px 0 0;
  font-size: 53px;
  font-weight: 300;
  letter-spacing: -1px;
}
.top-date {
  font-family: "Roboto", sans-serif;
  font-size: 28px;
  line-height: 38px;
  text-align: center;
  width: 226px;
  margin-right: 47px;
  margin-bottom: 2px;
}
.top-date-first {
  margin-left: auto;
  margin-right: 55px;
}
.logo-nc {
  display: flex;
  align-items: center;
  height: 60px;
  margin-right: 28px;
  font-family: "Roboto", sans-serif;
}
.logo-nc-big {
  font-size: 80px;
  font-weight: 900;
  letter-spacing: 2px;
  line-height: 60px;
}
.logo-nc-small {
  font-size: 34px;
  line-height: 28px;
  font-weight: 500;
  margin-left: 8px;
}
.logo-arrow {
  width: 70px;
  height: 80px;
  fill: #fff;
  margin-right: 6px;
}
.logo-itre {
  font-family: "Roboto", sans-serif;
  font-size: 68px;
  font-weight: 900;
  letter-spacing: 6px;
}

.page {
  flex: 1;
  display: flex;
  min-height: 0;
  padding-top: 73px;
}

/* slicers */
.filters {
  width: 475px;
  flex: none;
  padding-left: 30px;
}
.slicer {
  height: 169.3px;
}
.slicer-type {
  height: 180px;
  padding-top: 14px;
}
.slicer-calendar {
  height: 170px;
}
.slicer-severity {
  height: 413px;
}
.slicer-lel {
  height: 167px;
}
.slicer-label {
  font-family: "Roboto", sans-serif;
  font-size: 34px;
  line-height: 44px;
  color: #2d2c2b;
  padding-left: 8px;
  letter-spacing: 0.2px;
  margin-bottom: 18px;
}
.slicer-type .slicer-label,
.slicer-lel .slicer-label {
  margin-bottom: 3px;
}
.slicer-severity .slicer-label {
  margin-bottom: 1px;
}
.option {
  display: flex;
  align-items: center;
  height: 46.5px;
  padding-left: 8px;
  font-size: 33px;
  letter-spacing: -0.2px;
  white-space: nowrap;
  color: #252423;
}
.radio {
  width: 28px;
  height: 28px;
  margin: 0 25px 0 3px;
  border: 2px solid #252423;
  border-radius: 50%;
  position: relative;
  flex: none;
}
.radio::after {
  content: "";
  position: absolute;
  left: 4px;
  top: 4px;
  width: 16px;
  height: 16px;
  border-radius: 50%;
  background: #252423;
}
.check {
  width: 34px;
  height: 34px;
  margin-right: 24px;
  background: #252423;
  flex: none;
  position: relative;
}
.check::after {
  content: "";
  position: absolute;
  left: 8px;
  top: 9px;
  width: 17px;
  height: 8px;
  border-left: 2px solid #fff;
  border-bottom: 2px solid #fff;
  transform: rotate(-45deg);
}
.check-part {
  background: #fff;
  border: 2px solid #8a8886;
}
.check-part::after {
  left: 7px;
  top: 7px;
  width: 16px;
  height: 16px;
  border: 0;
  background: #767676;
  transform: none;
}
.dropdown {
  width: 404px;
  height: 71px;
  border: 3px solid #ededed;
  display: flex;
  align-items: center;
  justify-content: space-between;
  padding: 0 14px 0 11px;
  font-size: 33.3px;
  letter-spacing: -0.3px;
  color: #666;
}
.dropdown span {
  padding-top: 4px;
}
.dropdown svg {
  width: 34px;
  height: 18px;
  fill: none;
  stroke: #605e5c;
  stroke-width: 1.6;
  flex: none;
}

/* report card */
.report {
  flex: 1;
  min-width: 0;
  padding-right: 24px;
}
.card {
  height: 1808px;
  border: 3px solid #e6e6e6;
  border-radius: 12px;
  padding: 18px 15px 0 16px;
}
.panel-head {
  height: 60px;
  background: #132b42;
  color: #fff;
  border-radius: 24px 24px 0 0;
  font-family: "Roboto", sans-serif;
  font-size: 35px;
  line-height: 66px;
  text-align: center;
  padding-left: 686px;
  border-bottom: 2px solid #4a5d70;
}
.panel-body {
  height: 228px;
  border: 3px solid #e6e6e6;
  border-top: 0;
  border-radius: 0 0 40px 40px;
  display: flex;
  align-items: center;
  padding-left: 42px;
}
.crash-icon {
  width: 201px;
  height: 200px;
  flex: none;
  margin-right: 84px;
}
.kpis {
  display: grid;
  grid-template-columns: 274px 276px 272px 308px 250px;
  flex: none;
  margin-right: 146px;
  padding-top: 4px;
}
.kpi {
  text-align: center;
}
.kpi-value {
  font-family: "Roboto", sans-serif;
  font-size: 52px;
  line-height: 62px;
  color: #252423;
}
.kpi-label {
  font-size: 33px;
  line-height: 62px;
  letter-spacing: -0.3px;
  color: #86305c;
  white-space: nowrap;
}
.kpi:last-child .kpi-label {
  padding-left: 28px;
}
.periods {
  width: 1200px;
  flex: none;
  font-family: "Roboto", sans-serif;
  font-size: 34.4px;
  line-height: 40.5px;
  text-align: center;
  margin-bottom: 12px;
  color: #252423;
  white-space: nowrap;
}
.map-title {
  margin: 0;
  height: 75px;
  padding-left: 15px;
  font-family: "Roboto", sans-serif;
  font-size: 47px;
  font-weight: 400;
  letter-spacing: 0.75px;
  line-height: 66px;
  color: #252423;
  white-space: nowrap;
}
.map {
  position: relative;
  width: 3140px;
  height: 1409px;
  margin-left: 15px;
  overflow: hidden;
  background: #abd0de;
}
.map-canvas {
  display: block;
  width: 3140px;
  height: 1409px;
}
.map-base {
  filter: blur(0.35px);
}
.map-base path {
  fill: none;
  vector-effect: non-scaling-stroke;
}
.ln-wood path {
  stroke: #c9dfb8;
  stroke-width: 5;
}
.ln-creek path {
  stroke: #8db9da;
  stroke-width: 2;
}
.ln-bound path {
  stroke: #b3a6bd;
  stroke-width: 3;
  stroke-dasharray: 22 6 5 6;
}
.ln-sea path {
  stroke: #aaa3bf;
  stroke-width: 2.5;
}
.map-base .ln-sea-wide {
  stroke: #a79cb8;
  stroke-width: 4.5;
}
.ln-minor path {
  stroke: #c6c3bd;
  stroke-width: 2.5;
}
.map-base .ln-rail {
  stroke: #9b9b98;
  stroke-width: 3;
}
.map-base .ln-edge {
  stroke: #555;
  stroke-width: 2.5;
  stroke-dasharray: 9 6;
}
.ln-second path {
  stroke: #f5c58a;
  stroke-width: 4.5;
}
.ln-primary path,
.map-base .ln-primary {
  stroke: #f79e82;
  stroke-width: 5.5;
}
.ln-trunk path {
  stroke: #e8688c;
  stroke-width: 6;
}
.shield rect {
  fill: #ebcbd2;
  stroke: #dda9b5;
  stroke-width: 0.8;
}
.shield text {
  font: 500 12.5px "Roboto", sans-serif;
  fill: #7b3c52;
  text-anchor: middle;
}
.place text,
.county text,
.water-name text {
  text-anchor: middle;
  font-family: "Noto Sans", sans-serif;
  paint-order: stroke;
  stroke: rgba(255,255,255,0.75);
  stroke-width: 1.6px;
}
.place text {
  font-size: 11.5px;
  fill: #4d4d4d;
}
.place .place-big {
  font-size: 15px;
  fill: #3c3c3c;
}
.county text {
  font-size: 11px;
  font-style: italic;
  fill: #a184a8;
}
.water-name text {
  font-size: 11px;
  font-style: italic;
  fill: #4d86c0;
  stroke-width: 0.8px;
}
.water-name .sound {
  font-size: 14px;
  fill: #7d9cc4;
  stroke: none;
}
.crash-lines path {
  fill: none;
  stroke-linecap: round;
  stroke-linejoin: round;
}
.rank-1 {
  stroke: #701010;
  stroke-width: 11.5;
}
.rank-2 {
  stroke: #990f12;
  stroke-width: 9.5;
}
.rank-3 {
  stroke: #ff0000;
  stroke-width: 7;
}
.rank-4 {
  stroke: #ff9406;
  stroke-width: 4;
}
.rank-5 {
  stroke: #fff200;
  stroke-width: 2.6;
}

/* map overlays */
.zoom-ctl {
  position: absolute;
  left: 30px;
  top: 29px;
  width: 96px;
  height: 183px;
  border: 6px solid rgba(0,0,0,0.3);
  border-radius: 8px;
  background-clip: padding-box;
  overflow: hidden;
}
.zoom-btn {
  height: 85px;
  background: #fff;
  font: 700 54px/85px "DejaVu Sans", sans-serif;
  text-align: center;
  color: #000;
}
.zoom-btn + .zoom-btn {
  border-top: 2px solid #ccc;
  height: 86px;
}
.layers {
  position: absolute;
  left: 2733px;
  top: 29px;
  width: 379px;
  height: 404px;
  background: #fff;
  border: 6px solid #8eaeb9;
  border-radius: 10px;
  font-family: "Liberation Sans", sans-serif;
  font-size: 37px;
  color: #333;
}
.layer-radios {
  height: 151px;
  padding: 16px 0 0 33px;
  border-bottom: 2px solid #e8e8e8;
  margin-bottom: 3px;
}
.layer-radio {
  display: flex;
  align-items: center;
  height: 58.5px;
}
.dot {
  width: 34px;
  height: 34px;
  border: 2px solid #808080;
  border-radius: 50%;
  margin-right: 20px;
  position: relative;
  flex: none;
}
.dot-on {
  width: 36px;
  height: 36px;
  margin-right: 18px;
  border-color: #0078d7;
}
.dot-on::after {
  content: "";
  position: absolute;
  left: 5px;
  top: 5px;
  width: 22px;
  height: 22px;
  border-radius: 50%;
  background: #0078d7;
}
.layer-group {
  display: flex;
  align-items: center;
  height: 69.5px;
  padding-left: 20px;
  font-weight: 700;
}
.tri {
  width: 0;
  height: 0;
  border-left: 18px solid #333;
  border-top: 13px solid transparent;
  border-bottom: 13px solid transparent;
  margin: 6px 37px 0 0;
}
.legend {
  position: absolute;
  left: 29px;
  top: 986px;
  width: 283px;
  height: 395px;
  background: #fff;
  border-radius: 8px;
  box-shadow: 0 0 30px rgba(0,0,0,0.25);
  padding: 24px 0 0 29px;
  font-family: "Liberation Sans", sans-serif;
  color: #444;
}
.legend-title {
  font-size: 40px;
  font-weight: 700;
  line-height: 48px;
  margin-bottom: 23px;
}
.legend-row {
  display: flex;
  align-items: center;
  height: 53.4px;
  font-size: 36px;
  color: #333;
}
.swatch {
  width: 105px;
  margin-right: 34px;
  flex: none;
}
.sw-1 { height: 29px; background: #660000; }
.sw-2 { height: 23.5px; background: #990000; }
.sw-3 { height: 17.5px; background: #ff0000; }
.sw-4 { height: 12px; background: #ff9900; }
.sw-5 { height: 6px; background: #ffff00; }
.attribution {
  position: absolute;
  right: 0;
  bottom: 0;
  height: 47px;
  width: 676px;
  background: rgba(255,255,255,0.8);
  display: flex;
  align-items: center;
  padding-left: 13px;
  font-family: "Liberation Sans", sans-serif;
  font-size: 34.5px;
  color: #333;
  white-space: nowrap;
}
.attribution svg {
  width: 35px;
  height: 24px;
  margin-right: 12px;
}
.attribution a {
  color: #0078a8;
}
.note {
  margin: 21px 0 0 16px;
  font-size: 37px;
  line-height: 50px;
  color: #252423;
  letter-spacing: -0.3px;
}

/* bottom tabs */
.tabs-bar {
  height: 144px;
  flex: none;
  background: #f3f3f3;
  position: relative;
}
.tabs-marks {
  height: 27px;
  position: relative;
}
.tabs-marks i {
  position: absolute;
  left: 245px;
  top: 0;
  width: 1px;
  height: 27px;
  background: #cfcfcf;
}
.tabs-marks i + i {
  left: 638px;
}
.tabs-row {
  display: flex;
  height: 69px;
  border-bottom: 3px solid #e1e1e1;
}
.tab-arrows {
  width: 79px;
  display: flex;
  justify-content: space-between;
  padding: 16px 15px 0 13px;
  flex: none;
  border-right: 1px solid #bdbdbd;
}
.tab-arrows svg {
  width: 12px;
  height: 44px;
  fill: none;
  stroke: #cfcfcf;
  stroke-width: 1.6;
}
.tab {
  background: #fff;
  border-right: 1px solid #d0d0d0;
  padding: 0 41.5px;
  font-size: 23px;
  line-height: 66px;
  letter-spacing: -0.1px;
  white-space: nowrap;
  color: #252423;
}
.tab-active {
  border-bottom: 8px solid #117865;
  height: 69px;
  font-weight: 600;
}
.status {
  display: flex;
  align-items: center;
  justify-content: flex-end;
  height: 48px;
  padding-right: 37px;
  color: #605e5c;
  font-size: 23px;
}
.zoom-minus {
  width: 8px;
  height: 6px;
  background: #605e5c;
  margin-right: 10px;
}
.zoom-track {
  width: 200px;
  height: 3px;
  background: #777;
  position: relative;
  margin-right: 11px;
}
.zoom-tick {
  position: absolute;
  left: 100px;
  top: -9px;
  width: 2px;
  height: 21px;
  background: #777;
}
.zoom-thumb {
  position: absolute;
  left: 110px;
  top: -12px;
  width: 8px;
  height: 24px;
  background: #605e5c;
}
.zoom-plus {
  width: 18px;
  margin-right: 26px;
  font-size: 30px;
  font-weight: 700;
  line-height: 30px;
  text-align: center;
}
.zoom-pct {
  margin-right: 28px;
  letter-spacing: -0.5px;
}
.zoom-fit {
  width: 28px;
  height: 22px;
  fill: none;
  stroke: #605e5c;
  stroke-width: 1.8;
}
```
